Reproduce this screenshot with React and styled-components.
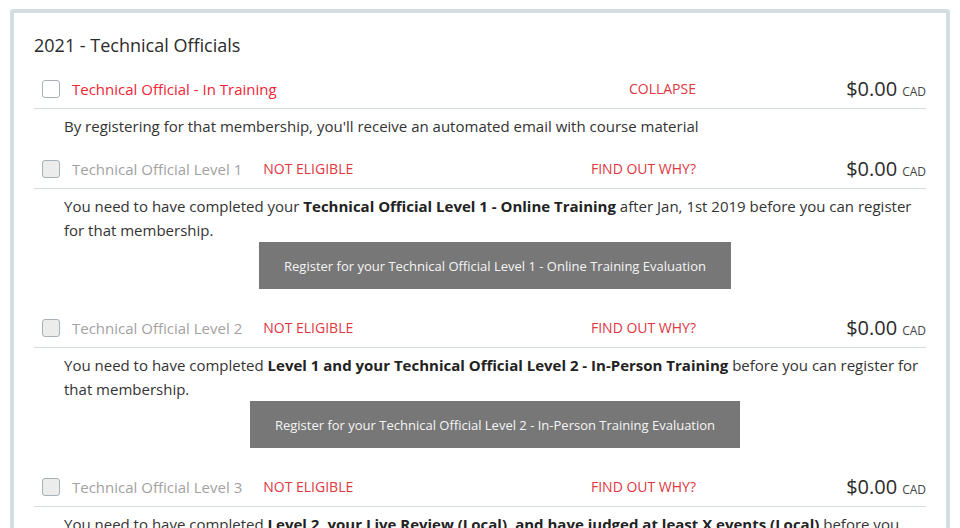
import styled, { createGlobalStyle } from 'styled-components';

const GlobalStyle = createGlobalStyle`
  body {
    margin: 0;
    background: #ffffff;
    font-family: "Open Sans", "Liberation Sans", sans-serif;
    color: #333333;
  }
`;

const memberships = [
  {
    id: 'training',
    name: 'Technical Official - In Training',
    eligible: true,
    link: 'COLLAPSE',
    price: '$0.00',
    text: <>By registering for that membership, you'll receive an automated email with course material</>,
  },
  {
    id: 'level1',
    name: 'Technical Official Level 1',
    eligible: false,
    link: 'FIND OUT WHY?',
    price: '$0.00',
    text: (
      <>
        You need to have completed your <b>Technical Official Level 1 - Online Training</b> after Jan, 1st 2019 before
        you can register for that membership.
      </>
    ),
    button: 'Register for your Technical Official Level 1 - Online Training Evaluation',
  },
  {
    id: 'level2',
    name: 'Technical Official Level 2',
    eligible: false,
    link: 'FIND OUT WHY?',
    price: '$0.00',
    text: (
      <>
        You need to have completed <b>Level 1 and your Technical Official Level 2 - In-Person Training</b> before you
        can register for that membership.
      </>
    ),
    button: 'Register for your Technical Official Level 2 - In-Person Training Evaluation',
  },
  {
    id: 'level3',
    name: 'Technical Official Level 3',
    eligible: false,
    link: 'FIND OUT WHY?',
    price: '$0.00',
    text: (
      <>
        You need to have completed <b>Level 2, your Live Review (Local), and have judged at least X events (Local)</b>{' '}
        before you can register for that membership.
      </>
    ),
  },
];

const App = () => {
  return (
    <Page>
      <GlobalStyle />
      <Card>
        <Title>2021 - Technical Officials</Title>
        {memberships.map((m) => (
          <Membership key={m.id}>
            <Header>
              <Checkbox disabled={!m.eligible} />
              <Name disabled={!m.eligible}>{m.name}</Name>
              {!m.eligible && <Status>NOT ELIGIBLE</Status>}
              <Spacer />
              <ActionLink>{m.link}</ActionLink>
              <Price>
                <Amount>{m.price}</Amount>
                <Currency>CAD</Currency>
              </Price>
            </Header>
            <Details>
              <Description>{m.text}</Description>
              {m.button && (
                <ButtonRow>
                  <EvalButton>{m.button}</EvalButton>
                </ButtonRow>
              )}
            </Details>
          </Membership>
        ))}
      </Card>
    </Page>
  );
};

export default App;

const Page = styled.div`
  padding: 9px 10px 0 10px;
`;

const Card = styled.div`
  border: 4px solid #d4dde1;
  border-radius: 3px;
  padding: 20px 20px 0 20px;
  min-height: 600px;
`;

const Title = styled.h2`
  margin: 0 0 12px 0;
  font-size: 18px;
  font-weight: 400;
  line-height: 24px;
  color: #2b2b2b;
`;

const Membership = styled.div`
  margin-bottom: 11px;
`;

const Header = styled.div`
  display: flex;
  align-items: center;
  height: 39px;
  padding-left: 8px;
  border-bottom: 1px solid #d5dde1;
`;

const Checkbox = styled.span`
  flex: none;
  width: 16px;
  height: 16px;
  border: 1px solid #a7b1b9;
  border-radius: 3px;
  background: ${(p) => (p.disabled ? '#ececec' : '#ffffff')};
  margin-right: 12px;
`;

const Name = styled.span`
  font-size: 15px;
  color: ${(p) => (p.disabled ? '#a2a2a2' : '#ef2536')};
`;

const Status = styled.span`
  margin-left: 21px;
  font-size: 14px;
  color: #e0363f;
`;

const Spacer = styled.div`
  flex: 1;
`;

const ActionLink = styled.span`
  font-size: 14px;
  color: #e0363f;
`;

const Price = styled.div`
  width: 230px;
  display: flex;
  justify-content: flex-end;
  align-items: baseline;
  gap: 5px;
`;

const Amount = styled.span`
  font-size: 20px;
  color: #2b2b2b;
`;

const Currency = styled.span`
  font-size: 12px;
  color: #444444;
`;

const Details = styled.div`
  padding: 5px 0 0 30px;
`;

const Description = styled.p`
  margin: 0;
  font-size: 15px;
  line-height: 24px;
  color: #333333;

  b {
    font-weight: 700;
    color: #222222;
  }
`;

const ButtonRow = styled.div`
  display: flex;
  justify-content: center;
  padding-bottom: 8px;
`;

const EvalButton = styled.button`
  height: 47px;
  padding: 0 25px;
  border: none;
  background: #777777;
  color: #f5f5f5;
  font-family: inherit;
  font-size: 13px;
  cursor: pointer;
`;
